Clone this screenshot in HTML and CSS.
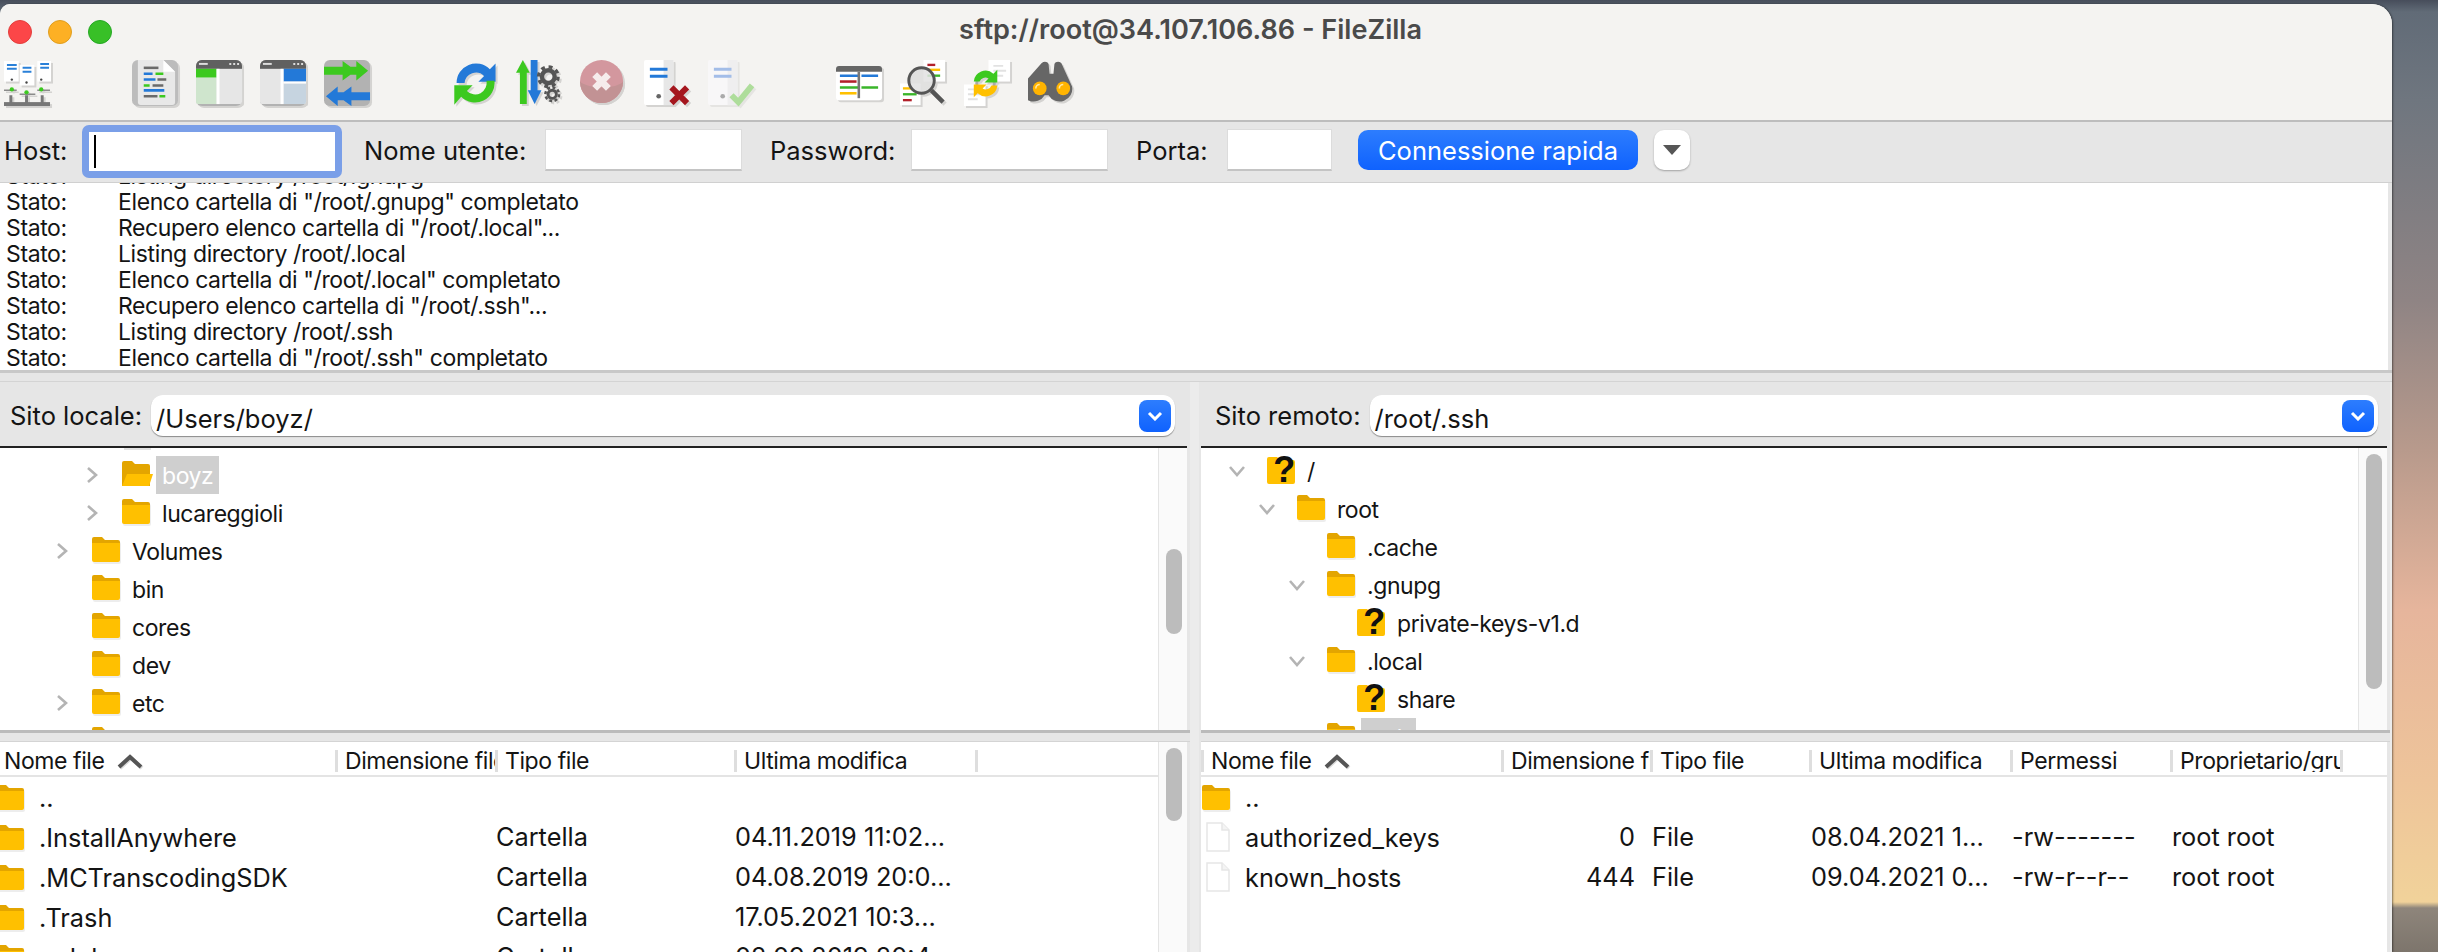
FILE: index.html
```html
<!DOCTYPE html>
<html lang="it">
<head>
  <meta charset="UTF-8">
  <title>sftp://root@34.107.106.86 - FileZilla</title>
  <link rel="stylesheet" href="styles.css">
</head>
<body>
  <!-- shared icons -->
  <svg class="defs" width="0" height="0">
    <symbol id="folder" viewBox="0 0 28 25">
      <path d="M0 2a2 2 0 0 1 2-2h8l3 3h13a2 2 0 0 1 2 2v6H0z" fill="#e3a500"/>
      <path d="M0 6h28v17a2 2 0 0 1-2 2H2a2 2 0 0 1-2-2z" fill="#ffc000"/>
    </symbol>
    <symbol id="folder-open" viewBox="0 0 32 25">
      <path d="M0 2a2 2 0 0 1 2-2h8l3 3h13a2 2 0 0 1 2 2v20H0z" fill="#e3a500"/>
      <path d="M5 13h26l-4 12H0z" fill="#ffc000"/>
    </symbol>
    <symbol id="folder-unknown" viewBox="0 0 30 29">
      <path d="M0 4a2 2 0 0 1 2-2h8l3 3h13a2 2 0 0 1 2 2v20a2 2 0 0 1-2 2H2a2 2 0 0 1-2-2z" fill="#ffc000"/>
      <text x="17" y="27" font-family="Liberation Sans" font-size="36" font-weight="700" text-anchor="middle" fill="#111">?</text>
    </symbol>
    <symbol id="file" viewBox="0 0 24 30">
      <path d="M1 1h15l7 7v21H1z" fill="#fff" stroke="#e6e6e6" stroke-width="1.5"/>
      <path d="M16 1v7h7" fill="#f4f4f4" stroke="#e6e6e6" stroke-width="1.5"/>
    </symbol>
    <symbol id="chev-right" viewBox="0 0 12 18">
      <path d="M2 2l8 7-8 7" fill="none" stroke="#b4b4b4" stroke-width="2.6"/>
    </symbol>
    <symbol id="chev-down" viewBox="0 0 18 12">
      <path d="M2 2l7 8 7-8" fill="none" stroke="#b4b4b4" stroke-width="2.6"/>
    </symbol>
    <symbol id="chev-white" viewBox="0 0 16 10">
      <path d="M2 2l6 6 6-6" fill="none" stroke="#fff" stroke-width="3"/>
    </symbol>
    <symbol id="sort-up" viewBox="0 0 26 15">
      <path d="M2 13L13 3l11 10" fill="none" stroke="#555" stroke-width="4"/>
    </symbol>
  </svg>

  <div class="window">
    <div class="titlebar">
      <div class="lights">
        <span class="light light-red"></span>
        <span class="light light-yellow"></span>
        <span class="light light-green"></span>
      </div>
      <div class="title">sftp://root@34.107.106.86 - FileZilla</div>
    </div>

    <div class="toolbar">
      <div class="tool-group group-site">
        <svg class="tool" viewBox="0 0 48 48">
          <rect x="0" y="1" width="15" height="21" fill="#fff"/>
          <rect x="34" y="1" width="15" height="21" fill="#fff"/>
          <rect x="16" y="5" width="15" height="21" fill="#fff"/>
          <path d="M3 4h10v2H3zM3 8h10v2H3zM37 3h9v2h-9zM37 7h9v2h-9zM19 7h9v2h-9zM19 11h9v2h-9z" fill="#2a80d8"/>
          <path d="M0 31h13M16 35h16M34 31h13" stroke="#8a8a8a" stroke-width="1.5"/>
          <path d="M7 36v8M23 36v8M39 36v8" stroke="#777" stroke-width="3"/>
          <rect x="0" y="43" width="47" height="4" fill="#777"/>
          <circle cx="8" cy="30" r="2.2" fill="#3cc91f"/>
          <circle cx="23" cy="33" r="2.2" fill="#3cc91f"/>
          <circle cx="38" cy="30" r="2.2" fill="#3cc91f"/>
          <circle cx="8" cy="20" r="1.2" fill="#444"/>
          <circle cx="23" cy="23" r="1.2" fill="#444"/>
          <circle cx="38" cy="20" r="1.2" fill="#444"/>
        </svg>
      </div>
      <div class="tool-group group-view">
        <svg class="tool" viewBox="0 0 48 48">
          <rect width="47" height="47" rx="6" fill="#bcbcbc"/>
          <path d="M6 0h26l12 12v31a3 3 0 0 1-3 3H9a3 3 0 0 1-3-3z" fill="#e8e8e8"/>
          <path d="M32 0l12 12H32z" fill="#fff"/>
          <path d="M12 8h15" stroke="#6a6a6a" stroke-width="2.6"/>
          <path d="M12 14h9M12 20h12M12 31h21" stroke="#2379d8" stroke-width="2.6"/>
          <path d="M24 14h8M12 26h6M28 37h6" stroke="#3cc91f" stroke-width="2.6"/>
          <path d="M26 20h9M21 26h11M12 37h14" stroke="#6a6a6a" stroke-width="2.6"/>
        </svg>
        <svg class="tool" viewBox="0 0 48 48">
          <rect width="47" height="47" rx="6" fill="#b2b2b2"/>
          <path d="M0 9h47v33a3 3 0 0 1-3 3H3a3 3 0 0 1-3-3z" fill="#e6e6e6"/>
          <path d="M0 6a6 6 0 0 1 6-6h35a6 6 0 0 1 6 6v3H0z" fill="#606060"/>
          <path d="M3 4h9" stroke="#ddd" stroke-width="2"/>
          <path d="M34 4h2M38 4h2M42 4h2" stroke="#ddd" stroke-width="2"/>
          <path d="M0 9h21v9H0z" fill="#3cc91f"/>
          <path d="M0 18h21v27H3a3 3 0 0 1-3-3z" fill="#cfe5cd"/>
          <rect x="21" y="9" width="3" height="36" fill="#fff"/>
        </svg>
        <svg class="tool" viewBox="0 0 48 48">
          <rect width="47" height="47" rx="6" fill="#b2b2b2"/>
          <path d="M0 9h47v33a3 3 0 0 1-3 3H3a3 3 0 0 1-3-3z" fill="#e6e6e6"/>
          <path d="M0 6a6 6 0 0 1 6-6h35a6 6 0 0 1 6 6v3H0z" fill="#606060"/>
          <path d="M3 4h9" stroke="#ddd" stroke-width="2"/>
          <path d="M34 4h2M38 4h2M42 4h2" stroke="#ddd" stroke-width="2"/>
          <path d="M24 9h23v13H24z" fill="#2379d8"/>
          <path d="M24 24h23v18a3 3 0 0 1-3 3H24z" fill="#c6d4e0"/>
          <rect x="24" y="22" width="23" height="2" fill="#fff"/>
          <rect x="21" y="9" width="3" height="36" fill="#fff"/>
        </svg>
        <svg class="tool" viewBox="0 0 48 48">
          <rect width="47" height="47" rx="6" fill="#b2b2b2"/>
          <path d="M0 7h19V1l8 6h6V1l12 10-12 10v-6h-6l-8 6v-6H0z" fill="#3cc91f"/>
          <path d="M47 33H28v-6l-8 6h-6v-6L2 37l12 10v-6h6l8 6v-6h19z" fill="#2379d8"/>
        </svg>
      </div>
      <div class="tool-group group-queue">
        <svg class="tool" viewBox="4 4 39 41">
          <path d="M7 24A17 17 0 0 1 36 12l5-5v16H26l5-5A10 10 0 0 0 14 24z" fill="#2379d8"/>
          <path d="M40 22A17 17 0 0 1 11 36l-6 7V26h16l-5 5A10 10 0 0 0 33 22z" fill="#3cc91f"/>
        </svg>
        <svg class="tool" viewBox="0 0 48 48">
          <path d="M7 0l7 13H11v32H4V13H0z" fill="#3cc91f"/>
          <path d="M15 0h7v31h4l-7 14-7-14h3z" fill="#2379d8"/>
          <circle cx="33" cy="17" r="6.5" fill="none" stroke="#555" stroke-width="4.5"/>
          <circle cx="33" cy="17" r="10" fill="none" stroke="#555" stroke-width="3.4" stroke-dasharray="4 3.85"/>
          <circle cx="37" cy="35" r="4.2" fill="none" stroke="#555" stroke-width="3"/>
          <circle cx="37" cy="35" r="7" fill="none" stroke="#555" stroke-width="2.6" stroke-dasharray="3 2.5"/>
        </svg>
        <svg class="tool" viewBox="0 0 48 48">
          <circle cx="22" cy="22" r="22" fill="#d3979e"/>
          <path d="M0 22a22 22 0 0 0 44 0c-6 8-36 8-44 0z" fill="#c29294"/>
          <path d="M15 15l14 14M29 15L15 29" stroke="#f6ecec" stroke-width="7"/>
        </svg>
        <svg class="tool" viewBox="0 0 48 48">
          <rect x="0" y="0" width="30" height="46" rx="2" fill="#fff"/>
          <rect x="20" y="0" width="10" height="46" fill="#e7e7e7"/>
          <path d="M6 8h18v3H6zM6 15h18v3H6z" fill="#2379d8"/>
          <circle cx="15" cy="37" r="2.4" fill="#666"/>
          <path d="M28 28l16 16M44 28L28 44" stroke="#a5161e" stroke-width="6"/>
        </svg>
        <svg class="tool tool-faded" viewBox="0 0 48 48">
          <rect x="0" y="0" width="30" height="46" rx="2" fill="#f8f7f8"/>
          <rect x="20" y="0" width="10" height="46" fill="#efeeef"/>
          <path d="M6 8h18v3H6zM6 15h18v3H6z" fill="#a3bde8"/>
          <circle cx="15" cy="37" r="2.4" fill="#aaa"/>
          <path d="M24 36l7 7 14-17" fill="none" stroke="#aedd9b" stroke-width="6"/>
        </svg>
      </div>
      <div class="tool-group group-search">
        <svg class="tool" viewBox="0 0 48 48">
          <rect x="0" y="6" width="47" height="35" rx="3" fill="#fff"/>
          <path d="M0 9a3 3 0 0 1 3-3h41a3 3 0 0 1 3 3v3H0z" fill="#666"/>
          <path d="M4 16h19M26 16h17" stroke="#2379d8" stroke-width="2.6"/>
          <path d="M4 22h17" stroke="#b2202a" stroke-width="2.6"/>
          <path d="M4 28h19M26 28h17" stroke="#3ab52a" stroke-width="2.6"/>
          <path d="M4 34h17" stroke="#ffc000" stroke-width="2.6"/>
          <rect x="22" y="12" width="2.6" height="27" fill="#777"/>
        </svg>
        <svg class="tool" viewBox="0 0 48 48">
          <rect x="24" y="0" width="22" height="22" fill="#fff"/>
          <path d="M28 5h8" stroke="#b2202a" stroke-width="2.4"/>
          <path d="M28 10h13" stroke="#ffc000" stroke-width="2.4"/>
          <path d="M28 16h13" stroke="#3ab52a" stroke-width="2.4"/>
          <rect x="0" y="24" width="21" height="22" fill="#fff"/>
          <path d="M3 29h9" stroke="#ffc000" stroke-width="2.4"/>
          <path d="M3 35h14" stroke="#3ab52a" stroke-width="2.4"/>
          <path d="M3 41h9" stroke="#b2202a" stroke-width="2.4"/>
          <circle cx="22" cy="21" r="13" fill="#e2e2e2" fill-opacity=".85" stroke="#555" stroke-width="3"/>
          <path d="M32 31l12 12" stroke="#555" stroke-width="4.5"/>
        </svg>
        <svg class="tool" viewBox="0 0 48 48">
          <rect x="25" y="0" width="22" height="22" fill="#fff"/>
          <path d="M30 6h10M30 11h13M30 16h10" stroke="#e2e2e2" stroke-width="2"/>
          <rect x="0" y="25" width="22" height="22" fill="#fff"/>
          <path d="M4 30h10M4 35h13M4 40h10" stroke="#e2e2e2" stroke-width="2"/>
          <circle cx="22" cy="24" r="9" fill="none" stroke="#aaa" stroke-width="3"/>
          <path d="M10 22A12 12 0 0 1 30 14l4-4v13H21l4-4a6 6 0 0 0-9 3z" fill="#3cc91f"/>
          <path d="M34 26a12 12 0 0 1-20 8l-4 4V25h13l-4 4a6 6 0 0 0 9-3z" fill="#ffc000"/>
        </svg>
        <svg class="tool" viewBox="0 0 48 48">
          <path d="M14 3c3-2 6-1 7 1l1 10h4l1-10c1-2 4-3 7-1l11 24a13 13 0 0 1-24 9h-4a13 13 0 0 1-24-9z" fill="#666"/>
          <circle cx="12" cy="29" r="7" fill="#ffb400"/>
          <circle cx="36" cy="29" r="7" fill="#ffb400"/>
          <path d="M8 29a4 4 0 0 1 4-4M32 29a4 4 0 0 1 4-4" fill="none" stroke="#ffe9a8" stroke-width="1.6"/>
        </svg>
      </div>
    </div>

    <div class="quickbar">
      <label class="qc-label">Host:</label>
      <div class="qc-focus"><div class="qc-host"><span class="caret"></span></div></div>
      <label class="qc-label after-host">Nome utente:</label>
      <div class="qc-input"></div>
      <label class="qc-label after-field">Password:</label>
      <div class="qc-input"></div>
      <label class="qc-label after-field">Porta:</label>
      <div class="qc-input"></div>
      <div class="qc-actions">
        <button class="qc-connect">Connessione rapida</button>
        <button class="qc-drop"><span class="triangle"></span></button>
      </div>
    </div>

    <div class="log">
      <div class="log-rows">
        <div class="log-row"><span class="log-key">Stato:</span><span>Listing directory /root/.gnupg</span></div>
        <div class="log-row"><span class="log-key">Stato:</span><span>Elenco cartella di "/root/.gnupg" completato</span></div>
        <div class="log-row"><span class="log-key">Stato:</span><span>Recupero elenco cartella di "/root/.local"...</span></div>
        <div class="log-row"><span class="log-key">Stato:</span><span>Listing directory /root/.local</span></div>
        <div class="log-row"><span class="log-key">Stato:</span><span>Elenco cartella di "/root/.local" completato</span></div>
        <div class="log-row"><span class="log-key">Stato:</span><span>Recupero elenco cartella di "/root/.ssh"...</span></div>
        <div class="log-row"><span class="log-key">Stato:</span><span>Listing directory /root/.ssh</span></div>
        <div class="log-row"><span class="log-key">Stato:</span><span>Elenco cartella di "/root/.ssh" completato</span></div>
      </div>
    </div>
    <div class="log-gap"></div>

    <div class="panes">
      <!-- sito locale -->
      <section class="pane pane-local">
        <div class="sitebar">
          <span class="site-label">Sito locale:</span>
          <div class="combo">
            <span class="combo-text">/Users/boyz/</span>
            <span class="combo-btn"><svg class="chev-white"><use href="#chev-white"/></svg></span>
          </div>
        </div>
        <div class="tree">
          <div class="tree-rows">
            <div class="tree-sliver"></div>
            <div class="tree-row indent-82"><span class="twisty"><svg class="chev-r"><use href="#chev-right"/></svg></span><svg class="ico-open"><use href="#folder-open"/></svg><span class="tree-name selected">boyz</span></div>
            <div class="tree-row indent-82"><span class="twisty"><svg class="chev-r"><use href="#chev-right"/></svg></span><svg class="ico-folder"><use href="#folder"/></svg><span class="tree-name">lucareggioli</span></div>
            <div class="tree-row indent-52"><span class="twisty"><svg class="chev-r"><use href="#chev-right"/></svg></span><svg class="ico-folder"><use href="#folder"/></svg><span class="tree-name">Volumes</span></div>
            <div class="tree-row indent-52"><span class="twisty"></span><svg class="ico-folder"><use href="#folder"/></svg><span class="tree-name">bin</span></div>
            <div class="tree-row indent-52"><span class="twisty"></span><svg class="ico-folder"><use href="#folder"/></svg><span class="tree-name">cores</span></div>
            <div class="tree-row indent-52"><span class="twisty"></span><svg class="ico-folder"><use href="#folder"/></svg><span class="tree-name">dev</span></div>
            <div class="tree-row indent-52"><span class="twisty"><svg class="chev-r"><use href="#chev-right"/></svg></span><svg class="ico-folder"><use href="#folder"/></svg><span class="tree-name">etc</span></div>
            <div class="tree-row indent-52"><span class="twisty"></span><svg class="ico-folder"><use href="#folder"/></svg></div>
          </div>
          <div class="scroll"><div class="thumb thumb-local-tree"></div></div>
        </div>
        <div class="split"></div>
        <div class="list">
          <div class="list-main">
            <div class="list-head cols-local">
              <div class="head-first">Nome file <svg class="sort"><use href="#sort-up"/></svg></div>
              <div class="head-cell">Dimensione file</div>
              <div class="head-cell">Tipo file</div>
              <div class="head-cell">Ultima modifica</div>
              <div class="head-cell"></div>
            </div>
            <div class="list-row cols-local">
              <div class="name-cell"><svg class="ico-folder"><use href="#folder"/></svg>..</div><div></div><div class="cell"></div><div class="cell"></div><div></div>
            </div>
            <div class="list-row cols-local">
              <div class="name-cell"><svg class="ico-folder"><use href="#folder"/></svg>.InstallAnywhere</div><div></div><div class="cell">Cartella</div><div class="cell">04.11.2019 11:02...</div><div></div>
            </div>
            <div class="list-row cols-local">
              <div class="name-cell"><svg class="ico-folder"><use href="#folder"/></svg>.MCTranscodingSDK</div><div></div><div class="cell">Cartella</div><div class="cell">04.08.2019 20:0...</div><div></div>
            </div>
            <div class="list-row cols-local">
              <div class="name-cell"><svg class="ico-folder"><use href="#folder"/></svg>.Trash</div><div></div><div class="cell">Cartella</div><div class="cell">17.05.2021 10:3...</div><div></div>
            </div>
            <div class="list-row cols-local">
              <div class="name-cell"><svg class="ico-folder"><use href="#folder"/></svg>.adobe</div><div></div><div class="cell">Cartella</div><div class="cell">02.09.2019 20:4...</div><div></div>
            </div>
          </div>
          <div class="scroll"><div class="thumb thumb-local-list"></div></div>
        </div>
      </section>

      <!-- sito remoto -->
      <section class="pane pane-remote">
        <div class="sitebar">
          <span class="site-label">Sito remoto:</span>
          <div class="combo">
            <span class="combo-text">/root/.ssh</span>
            <span class="combo-btn"><svg class="chev-white"><use href="#chev-white"/></svg></span>
          </div>
        </div>
        <div class="tree">
          <div class="tree-rows">
            <div class="tree-row indent-26"><span class="twisty"><svg class="chev-d"><use href="#chev-down"/></svg></span><svg class="ico-unknown"><use href="#folder-unknown"/></svg><span class="tree-name">/</span></div>
            <div class="tree-row indent-56"><span class="twisty"><svg class="chev-d"><use href="#chev-down"/></svg></span><svg class="ico-folder"><use href="#folder"/></svg><span class="tree-name">root</span></div>
            <div class="tree-row indent-86"><span class="twisty"></span><svg class="ico-folder"><use href="#folder"/></svg><span class="tree-name">.cache</span></div>
            <div class="tree-row indent-86"><span class="twisty"><svg class="chev-d"><use href="#chev-down"/></svg></span><svg class="ico-folder"><use href="#folder"/></svg><span class="tree-name">.gnupg</span></div>
            <div class="tree-row indent-116"><span class="twisty"></span><svg class="ico-unknown"><use href="#folder-unknown"/></svg><span class="tree-name">private-keys-v1.d</span></div>
            <div class="tree-row indent-86"><span class="twisty"><svg class="chev-d"><use href="#chev-down"/></svg></span><svg class="ico-folder"><use href="#folder"/></svg><span class="tree-name">.local</span></div>
            <div class="tree-row indent-116"><span class="twisty"></span><svg class="ico-unknown"><use href="#folder-unknown"/></svg><span class="tree-name">share</span></div>
            <div class="tree-row indent-86"><span class="twisty"></span><svg class="ico-folder"><use href="#folder"/></svg><span class="tree-name selected">.ssh</span></div>
          </div>
          <div class="scroll"><div class="thumb thumb-remote-tree"></div></div>
        </div>
        <div class="split"></div>
        <div class="list">
          <div class="list-main">
            <div class="list-head cols-remote">
              <div class="head-cell">Nome file <svg class="sort"><use href="#sort-up"/></svg></div>
              <div class="head-cell">Dimensione file</div>
              <div class="head-cell">Tipo file</div>
              <div class="head-cell">Ultima modifica</div>
              <div class="head-cell">Permessi</div>
              <div class="head-cell">Proprietario/gruppo</div>
              <div class="head-cell"></div>
            </div>
            <div class="list-row cols-remote">
              <div class="name-cell"><svg class="ico-folder"><use href="#folder"/></svg>..</div><div></div><div></div><div></div><div></div><div></div><div></div>
            </div>
            <div class="list-row cols-remote">
              <div class="name-cell"><svg class="ico-file"><use href="#file"/></svg>authorized_keys</div><div class="size-cell">0</div><div class="cell">File</div><div class="cell">08.04.2021 1...</div><div class="cell">-rw-------</div><div class="cell">root root</div><div></div>
            </div>
            <div class="list-row cols-remote">
              <div class="name-cell"><svg class="ico-file"><use href="#file"/></svg>known_hosts</div><div class="size-cell">444</div><div class="cell">File</div><div class="cell">09.04.2021 0...</div><div class="cell">-rw-r--r--</div><div class="cell">root root</div><div></div>
            </div>
          </div>
        </div>
      </section>
    </div>
  </div>
</body>
</html>
```

FILE: styles.css
```css
* { box-sizing: border-box; }

html, body {
  margin: 0;
  height: 952px;
  overflow: hidden;
}

/* wallpaper */
body {
  padding-top: 4px;
  font-family: Inter, "Liberation Sans", sans-serif;
  color: #141414;
  background:
    linear-gradient(to bottom, transparent 902px, #8e857b 908px, #7d756c 952px),
    linear-gradient(to bottom, #474d5b 0, #616b77 12px, #6f767f 100px, #8f8484 300px, #b89a8c 450px, #e6b59c 610px, #eec49a 780px, #f1d29a 900px);
}

.defs { position: absolute; }

.window {
  width: 2392px;
  height: 948px;
  overflow: hidden;
  background: #e6e6e6;
  border-radius: 10px 20px 0 0;
  box-shadow: 1px 0 2px rgba(0,0,0,0.45);
}

/* title + toolbar */
.titlebar {
  display: flex;
  align-items: center;
  height: 52px;
  background: #f4f3f1;
  position: relative;
}
.lights {
  display: flex;
  gap: 16px;
  margin: 4px 0 0 8px;
}
.light {
  width: 24px;
  height: 24px;
  border-radius: 50%;
}
.light-red { background: #fc4648; border: 1px solid #e33e3c; }
.light-yellow { background: #fdb024; border: 1px solid #e09e1e; }
.light-green { background: #38c027; border: 1px solid #25a825; }
.title {
  position: absolute;
  left: 959px;
  top: 12px;
  font-size: 27.1px;
  line-height: 28px;
  font-weight: 600;
  color: #4a4a4a;
  white-space: nowrap;
}

.toolbar {
  display: flex;
  height: 66px;
  padding: 4px 0 0 4px;
  background: #f4f3f1;
  border-bottom: 2px solid #bdbdbd;
}
.tool-group {
  display: flex;
  gap: 17px;
}
.group-view { margin-left: 81px; }
.group-queue { margin-left: 81px; }
.group-search { margin-left: 81px; }
.tool {
  width: 47px;
  height: 47px;
  filter: drop-shadow(2px 2px 0 rgba(0,0,0,0.13));
}
.tool-faded { filter: drop-shadow(2px 2px 0 rgba(0,0,0,0.06)); }

/* connessione rapida */
.quickbar {
  display: grid;
  grid-template-columns: 78px 260px 203px 197px 169px 197px 119px 105px 358px;
  align-items: center;
  height: 61px;
  padding: 0 0 4px 4px;
  background: #e6e6e6;
  border-bottom: 1px solid #d0d0d0;
}
.qc-label {
  font-size: 25.5px;
  padding-top: 1px;
}
.after-host { padding-left: 22px; }
.after-field { padding-left: 28px; }
.qc-focus {
  height: 53px;
  margin-top: 3px;
  padding: 7px;
  background: #7a9fe8;
  border-radius: 7px;
}
.qc-host {
  height: 39px;
  padding: 3px 5px;
  background: #fff;
}
.caret {
  display: block;
  width: 2px;
  height: 33px;
  background: #000;
}
.qc-input {
  height: 42px;
  background: #fff;
  border: 1px solid #dcdcdc;
  border-bottom: 2px solid #c4c4c4;
}
.qc-actions {
  display: flex;
  align-items: center;
  gap: 16px;
  padding-left: 26px;
}
.qc-connect {
  width: 280px;
  height: 40px;
  padding: 0;
  border: none;
  border-radius: 10px;
  background: linear-gradient(to bottom, #2d7dfe, #0f62fe);
  color: #fff;
  font-family: inherit;
  font-size: 25.5px;
}
.qc-drop {
  display: flex;
  align-items: center;
  justify-content: center;
  width: 36px;
  height: 40px;
  padding: 0;
  border: none;
  border-radius: 10px;
  background: #fff;
  box-shadow: 0 1px 2px rgba(0,0,0,0.3);
}
.triangle {
  width: 0;
  height: 0;
  border-left: 9px solid transparent;
  border-right: 9px solid transparent;
  border-top: 10px solid #565656;
}

/* log */
.log {
  height: 187px;
  overflow: hidden;
  background: #fff;
  margin-right: 4px;
}
.log-rows { margin-top: -20px; }
.log-row {
  display: flex;
  height: 26px;
  line-height: 26px;
  padding-left: 6px;
  font-size: 23px;
  letter-spacing: -0.38px;
  white-space: nowrap;
}
.log-key { width: 112px; }
.log-gap {
  height: 12px;
  background: #e6e6e6;
  border-top: 3px solid #c8c8c8;
  border-bottom: 1px solid #d4d4d4;
}

/* pannelli */
.panes {
  display: flex;
  gap: 9px;
  background: #ececec;
  height: 570px;
}
.pane {
  width: 1190px;
  display: flex;
  flex-direction: column;
  background: #e6e6e6;
}
.pane-remote { width: 1191px; padding-left: 2px; }

.sitebar {
  display: flex;
  align-items: center;
  gap: 9px;
  height: 66px;
  padding: 3px 12px 0 10px;
  border-bottom: 2px solid #222;
  margin-right: 3px;
}
.pane-remote .sitebar { padding-left: 14px; padding-right: 9px; }
.site-label {
  font-size: 25.5px;
  white-space: nowrap;
}
.combo {
  flex: 1;
  display: flex;
  align-items: center;
  justify-content: space-between;
  height: 41px;
  padding: 0 4px 0 5px;
  background: #fff;
  border-radius: 12px;
  box-shadow: 0 1px 1px rgba(0,0,0,0.4);
}
.combo-text {
  font-size: 25.5px;
  padding-top: 5px;
}
.combo-btn {
  display: flex;
  align-items: center;
  justify-content: center;
  width: 32px;
  height: 32px;
  border-radius: 8px;
  background: linear-gradient(to bottom, #2d7dfe, #0f62fe);
}
.chev-white { width: 16px; height: 10px; }

/* albero */
.tree {
  display: flex;
  height: 282px;
  margin-right: 3px;
  background: #fff;
  overflow: hidden;
}
.tree-rows { flex: 1; }
.pane-local .tree-rows { padding-top: 1px; }
.pane-remote .tree-rows { padding-top: 4px; }
.tree-sliver {
  width: 27px;
  height: 2px;
  margin: -1px 0 6px 124px;
  background: #e2e2e2;
}
.tree-row {
  display: flex;
  align-items: center;
  height: 38px;
  font-size: 23px;
  letter-spacing: -0.42px;
  white-space: nowrap;
}
.indent-26 { padding-left: 26px; }
.indent-52 { padding-left: 52px; }
.indent-56 { padding-left: 56px; }
.indent-82 { padding-left: 82px; }
.indent-86 { padding-left: 86px; }
.indent-116 { padding-left: 116px; }
.twisty {
  display: flex;
  align-items: center;
  justify-content: flex-start;
  width: 40px;
  height: 100%;
  flex: none;
}
.chev-r { width: 12px; height: 18px; margin-left: 4px; }
.chev-d { width: 18px; height: 12px; margin-left: 1px; }
.ico-folder {
  width: 28px;
  height: 25px;
  flex: none;
  margin-top: -3px;
  filter: drop-shadow(1px 2px 0 rgba(0,0,0,0.07));
}
.ico-open {
  width: 32px;
  height: 25px;
  flex: none;
  margin-top: -3px;
  margin-right: -4px;
}
.ico-unknown {
  width: 30px;
  height: 29px;
  flex: none;
  margin-top: -3px;
  margin-right: -2px;
}
.tree-name {
  display: block;
  height: 38px;
  line-height: 40px;
  padding: 0 6px;
  margin-left: 6px;
}
.selected {
  background: #cfcfcf;
  color: #fff;
}

.scroll {
  width: 29px;
  flex: none;
  background: #fafafa;
  border-left: 1px solid #e4e4e4;
  padding-left: 7px;
}
.thumb {
  width: 16px;
  background: #bcbcbc;
  border-radius: 8px;
}
.thumb-local-tree { height: 85px; margin-top: 101px; }
.thumb-local-list { height: 73px; margin-top: 6px; }
.thumb-remote-tree { height: 235px; margin-top: 6px; }

/* lista file */
.split {
  height: 12px;
  flex: none;
  background: #e6e6e6;
  border-top: 3px solid #bbb;
  border-bottom: 1px solid #d4d4d4;
}
.list {
  display: flex;
  flex: 1;
  min-height: 0;
  margin-right: 3px;
  background: #fff;
  overflow: hidden;
}
.list-main {
  flex: 1;
  min-width: 0;
  padding-top: 2px;
}
.cols-local {
  display: grid;
  grid-template-columns: 335px 160px 239px 241px 183px;
}
.cols-remote {
  display: grid;
  grid-template-columns: 300px 149px 159px 201px 160px 170px 46px;
}
.list-head {
  align-items: center;
  height: 33px;
  padding-top: 3px;
  border-bottom: 2px solid #e4e4e4;
  font-size: 23px;
  letter-spacing: -0.42px;
}
.head-first,
.head-cell {
  display: flex;
  align-items: center;
  height: 22px;
  overflow: hidden;
  white-space: nowrap;
}
.head-first { padding-left: 4px; }
.head-cell {
  padding-left: 7px;
  border-left: 3px solid #dedede;
}
.sort {
  width: 26px;
  height: 15px;
  margin-left: 13px;
  flex: none;
  filter: drop-shadow(1px 1px 0 rgba(0,0,0,0.15));
}
.list-row {
  height: 40px;
  align-items: center;
  font-size: 25.3px;
  white-space: nowrap;
}
.name-cell {
  display: flex;
  align-items: center;
  gap: 15px;
  height: 40px;
}
.pane-local .name-cell { margin-left: -4px; }
.pane-remote .name-cell { padding-left: 1px; }
.name-cell .ico-folder { margin-top: 0; }
.ico-file {
  width: 24px;
  height: 30px;
  flex: none;
  margin-left: 4px;
}
.cell {
  padding-left: 2px;
  line-height: 40px;
  height: 40px;
}
.pane-local .cell { padding-left: 1px; }
.size-cell {
  text-align: right;
  padding-right: 15px;
  line-height: 40px;
  height: 40px;
}
```
